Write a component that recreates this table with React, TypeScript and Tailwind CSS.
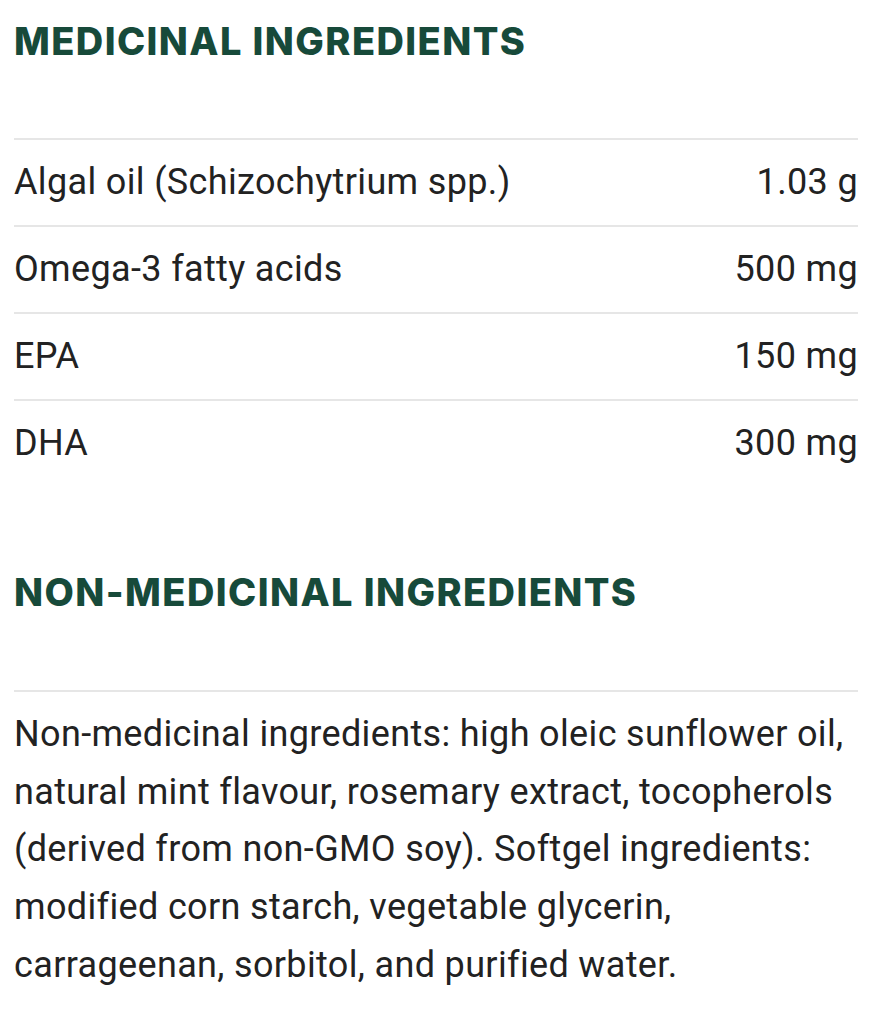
import React from "react";

const rows = [
  { name: "Algal oil (Schizochytrium spp.)", amount: "1.03 g" },
  { name: "Omega-3 fatty acids", amount: "500 mg" },
  { name: "EPA", amount: "150 mg" },
  { name: "DHA", amount: "300 mg" },
];

const heading =
  "font-['Inter','Lato',sans-serif] font-extrabold uppercase text-[38px] leading-[48px] text-[#174a3a] tracking-[1.4px]";

const App: React.FC = () => {
  return (
    <div className="min-h-screen bg-white pl-[14px] pr-[17px] font-['Roboto','Liberation_Sans',sans-serif] text-[#222] tracking-[0.35px]">
      <h2 className={`${heading} pt-[17px]`}>Medicinal Ingredients</h2>

      <div className="mt-[73px]">
        {rows.map((row) => (
          <div
            key={row.name}
            className="flex items-center justify-between border-t-2 border-[#e6e6e6] py-[14px] text-[36px] leading-[57px]"
          >
            <span>{row.name}</span>
            <span>{row.amount}</span>
          </div>
        ))}
      </div>

      <h2 className={`${heading} mt-[82px]`}>Non-Medicinal Ingredients</h2>

      <div className="mt-[74px] border-t-2 border-[#e6e6e6] pt-[14px]">
        <p className="text-[36px] leading-[57.7px]">
          Non-medicinal ingredients: high oleic sunflower oil, natural mint flavour, rosemary extract,
          tocopherols (derived from non-GMO soy). Softgel ingredients: modified corn starch, vegetable
          glycerin, carrageenan, sorbitol, and purified water.
        </p>
      </div>
    </div>
  );
};

export default App;
